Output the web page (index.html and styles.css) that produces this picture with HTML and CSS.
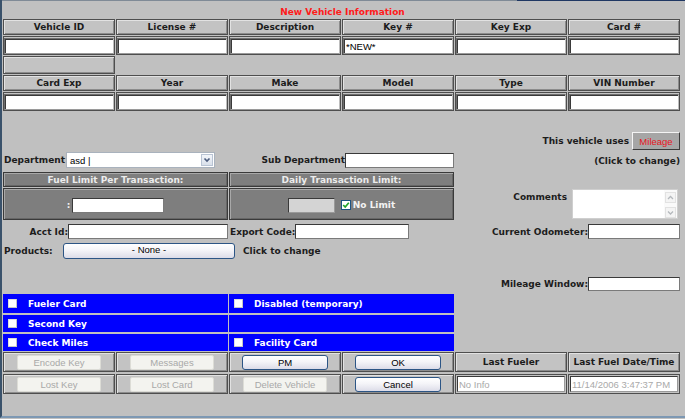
FILE: index.html
```html
<!DOCTYPE html>
<html>
<head>
<meta charset="utf-8">
<title>New Vehicle Information</title>
<link rel="stylesheet" href="styles.css">
</head>
<body>
<div class="page">
  <div class="topline"></div>
  <div class="title">New Vehicle Information</div>

  <div class="grid6 top">
    <div class="cell hd">Vehicle ID</div>
    <div class="cell hd">License #</div>
    <div class="cell hd">Description</div>
    <div class="cell hd">Key #</div>
    <div class="cell hd">Key Exp</div>
    <div class="cell hd">Card #</div>
    <div class="cell fc"><input class="fld" type="text"></div>
    <div class="cell fc"><input class="fld" type="text"></div>
    <div class="cell fc"><input class="fld" type="text"></div>
    <div class="cell fc"><input class="fld" type="text" value="*NEW*"></div>
    <div class="cell fc"><input class="fld" type="text"></div>
    <div class="cell fc"><input class="fld" type="text"></div>
    <div class="cell blank"></div>
    <div class="cell hd newrow">Card Exp</div>
    <div class="cell hd">Year</div>
    <div class="cell hd">Make</div>
    <div class="cell hd">Model</div>
    <div class="cell hd">Type</div>
    <div class="cell hd">VIN Number</div>
    <div class="cell fc"><input class="fld" type="text"></div>
    <div class="cell fc"><input class="fld" type="text"></div>
    <div class="cell fc"><input class="fld" type="text"></div>
    <div class="cell fc"><input class="fld" type="text"></div>
    <div class="cell fc"><input class="fld" type="text"></div>
    <div class="cell fc"><input class="fld" type="text"></div>
  </div>

  <div class="grid6 r-uses">
    <div class="uses">
      <span>This vehicle uses</span>
      <span class="mileage">Mileage</span>
    </div>
  </div>

  <div class="grid6 r-dept">
    <div class="dept">
      <span class="lbl-dept">Department</span>
      <div class="select">
        <span class="sel-text">asd |</span>
        <span class="sel-btn"><svg width="10" height="10" viewBox="0 0 10 10"><path d="M2.5 3.5 L5 6 L7.5 3.5" fill="none" stroke="#4b5c7e" stroke-width="1.6"/></svg></span>
      </div>
    </div>
    <div class="subdept">
      <span>Sub Department</span>
      <input class="tx w109" type="text">
    </div>
    <div class="clickchg">(Click to change)</div>
  </div>

  <div class="grid6 r-fuelhd">
    <div class="dark barL">Fuel Limit Per Transaction:</div>
    <div class="dark barR">Daily Transaction Limit:</div>
  </div>

  <div class="grid6 r-fuelbody">
    <div class="dark boxL">
      <span class="colon">:</span>
      <input class="tx w92" type="text">
    </div>
    <div class="dark boxR">
      <span class="dis"></span>
      <span class="chk"><svg width="8" height="8" viewBox="0 0 8 8"><path d="M1.2 4 L3.2 6 L6.8 1.8" fill="none" stroke="#21a32a" stroke-width="1.7"/></svg></span>
      <span class="nolimit">No Limit</span>
    </div>
    <div class="comments">
      <span class="lbl-com">Comments</span>
      <div class="ta">
        <div class="sb">
          <span class="sbb"><svg width="9" height="9" viewBox="0 0 9 9"><path d="M2 6 L4.5 3.5 L7 6" fill="none" stroke="#b4b8bc" stroke-width="1.3"/></svg></span>
          <span class="sbb"><svg width="9" height="9" viewBox="0 0 9 9"><path d="M2 3.5 L4.5 6 L7 3.5" fill="none" stroke="#b4b8bc" stroke-width="1.3"/></svg></span>
        </div>
      </div>
    </div>
  </div>

  <div class="grid6 r-acct">
    <div class="acct">
      <span>Acct Id:</span>
      <input class="tx w160" type="text">
    </div>
    <div class="export">
      <span>Export Code:</span>
      <input class="tx w114" type="text">
    </div>
    <div class="odo">
      <span>Current Odometer:</span>
      <input class="tx w92" type="text">
    </div>
  </div>

  <div class="grid6 r-prod">
    <div class="prod">
      <span class="lbl-prod">Products:</span>
      <button class="xpbtn none">- None -</button>
      <span class="prod-click">Click to change</span>
    </div>
  </div>

  <div class="grid6 r-mw">
    <div class="mw">
      <span>Mileage Window:</span>
      <input class="tx w92 h14" type="text">
    </div>
  </div>

  <div class="grid6 blue">
    <div class="bl bl-l"><span class="cb"></span><span>Fueler Card</span></div>
    <div class="bl bl-r"><span class="cb"></span><span>Disabled (temporary)</span></div>
    <div class="bl bl-l"><span class="cb"></span><span>Second Key</span></div>
    <div class="bl bl-r"></div>
    <div class="bl bl-l"><span class="cb"></span><span>Check Miles</span></div>
    <div class="bl bl-r"><span class="cb"></span><span>Facility Card</span></div>
  </div>

  <div class="grid6 btns">
    <div class="cell bc"><button class="bt off" disabled>Encode Key</button></div>
    <div class="cell bc"><button class="bt off" disabled>Messages</button></div>
    <div class="cell bc"><button class="bt xpbtn">PM</button></div>
    <div class="cell bc"><button class="bt xpbtn">OK</button></div>
    <div class="cell hd">Last Fueler</div>
    <div class="cell hd">Last Fuel Date/Time</div>
    <div class="cell bc"><button class="bt off" disabled>Lost Key</button></div>
    <div class="cell bc"><button class="bt off" disabled>Lost Card</button></div>
    <div class="cell bc"><button class="bt off" disabled>Delete Vehicle</button></div>
    <div class="cell bc"><button class="bt xpbtn">Cancel</button></div>
    <div class="cell ic"><input class="ro" type="text" value="No Info" readonly></div>
    <div class="cell ic"><input class="ro" type="text" value="11/14/2006 3:47:37 PM" readonly></div>
  </div>
</div>
</body>
</html>
```

FILE: styles.css
```css
* { box-sizing: border-box; }

html, body {
  margin: 0;
  padding: 0;
  background: #c0c0c0;
}

body {
  font: bold 9px "DejaVu Sans", Verdana, sans-serif;
  color: #1c1c1c;
}

input, button {
  font: 9.5px "Liberation Sans", Arial, sans-serif;
  margin: 0;
  outline: none;
}

.page {
  width: 685px;
  height: 418px;
  border-left: 2px solid #3a526b;
  border-bottom: 2px solid #7d98b3;
}

.topline {
  height: 1px;
  background: linear-gradient(to right, #7f8a96 0, #7f8a96 515px, #1f3763 515px);
}

.title {
  width: 679px;
  margin-left: 1px;
  height: 18px;
  padding-top: 5px;
  line-height: 12px;
  text-align: center;
  color: #ff1a1a;
}

.grid6 {
  display: grid;
  grid-template-columns: repeat(6, 112px);
  column-gap: 1px;
  margin-left: 1px;
}

/* ---------- top table ---------- */
.top {
  grid-template-rows: 16px 19px 18px 16px 19px;
  row-gap: 1px;
}

.cell {
  border: 1px solid #4e4e4e;
  box-shadow: inset 1px 1px 0 #e2e2e2, inset -1px -1px 0 #8c8c8c;
  background: #c3c3c3;
}

.hd {
  display: flex;
  align-items: center;
  justify-content: center;
  white-space: nowrap;
}

.newrow { grid-column-start: 1; }

.fc {
  padding: 1px 0 0 0;
  box-shadow: none;
}

.fld {
  display: block;
  width: 100%;
  height: 100%;
  background: #fff;
  border: 1px solid;
  border-color: #6e6e6e #bdbdbd #9a9a9a #6e6e6e;
  box-shadow: inset 1px 1px 0 #3a3a3a;
  padding: 0 2px;
  color: #000;
}

/* ---------- generic middle pieces ---------- */
.tx {
  height: 15px;
  background: #fff;
  border: 1px solid;
  border-color: #3a3a3a #7a7a7a #7a7a7a #3a3a3a;
  padding: 0 2px;
}
.w92 { width: 92px; }
.w109 { width: 109px; }
.w114 { width: 114px; }
.w160 { width: 160px; }
.h14 { height: 14px; }

.r-uses { margin-top: 21px; height: 18px; }
.uses {
  grid-column: 4 / 7;
  display: flex;
  justify-content: flex-end;
  align-items: center;
  gap: 3px;
}
.mileage {
  width: 48px;
  height: 18px;
  display: flex;
  align-items: center;
  justify-content: center;
  background: #a6a6a6;
  border: 1px solid;
  border-color: #f4f4f4 #3c3c3c #3c3c3c #f4f4f4;
  color: #e8141c;
  font: 9.5px "Liberation Sans", Arial, sans-serif;
}

.r-dept { margin-top: 2px; height: 16px; }
.dept {
  grid-column: 1 / 3;
  display: flex;
  align-items: center;
  padding-left: 1px;
}
.lbl-dept { width: 62px; }
.select {
  width: 149px;
  height: 16px;
  background: #fff;
  border: 1px solid #a9b2bd;
  display: flex;
  align-items: center;
  justify-content: space-between;
  padding: 0 1px 0 3px;
  font: 9.5px "Liberation Sans", Arial, sans-serif;
  color: #000;
}
.sel-btn {
  width: 12px;
  height: 12px;
  background: linear-gradient(#f2f5fa, #d9e0ea);
  border: 1px solid #b9c4d4;
  display: flex;
  align-items: center;
  justify-content: center;
}
.subdept {
  grid-column: 3 / 5;
  display: flex;
  justify-content: flex-end;
  align-items: center;
}
.clickchg {
  grid-column: 5 / 7;
  align-self: center;
  text-align: right;
  padding-top: 2px;
}

.r-fuelhd { margin-top: 4px; height: 15px; }
.dark {
  background: #7e7e7e;
  border: 1px solid #3a3a3a;
  box-shadow: inset 1px 1px 0 #a8a8a8, inset -1px -1px 0 #666;
  color: #ececec;
}
.barL, .barR {
  display: flex;
  align-items: center;
  justify-content: center;
}
.barL, .boxL { grid-column: 1 / 3; }
.barR, .boxR { grid-column: 3 / 5; }

.r-fuelbody { margin-top: 1px; height: 32px; }
.boxL, .boxR {
  display: flex;
  align-items: center;
  justify-content: center;
}
.boxL { padding-top: 2px; }
.boxR { padding-top: 2px; }
.colon { color: #f0f0f0; margin-right: 2px; }
.dis {
  width: 47px;
  height: 15px;
  background: #d4d4d4;
  border: 1px solid;
  border-color: #3a3a3a #9a9a9a #9a9a9a #3a3a3a;
}
.chk {
  width: 10px;
  height: 10px;
  margin-left: 6px;
  margin-right: 2px;
  background: #fff;
  border: 1px solid #1d5281;
  display: flex;
  align-items: center;
  justify-content: center;
}
.nolimit { color: #f2f2f2; }

.comments {
  grid-column: 5 / 7;
  display: flex;
  justify-content: flex-end;
  align-items: flex-start;
  gap: 5px;
  padding-right: 2px;
}
.lbl-com { margin-top: 3px; line-height: 12px; }
.ta {
  margin-top: 1px;
  width: 106px;
  height: 30px;
  background: #fff;
  border: 1px solid #cfcfcf;
  display: flex;
  justify-content: flex-end;
}
.sb {
  width: 13px;
  display: flex;
  flex-direction: column;
  justify-content: space-between;
  padding: 2px 1px 0 1px;
  background: #fafafa;
}
.sbb {
  width: 11px;
  height: 11px;
  border: 1px solid #e2e2e2;
  background: #f4f4f4;
  display: flex;
  align-items: center;
  justify-content: center;
}

.r-acct { margin-top: 4px; height: 15px; }
.acct {
  grid-column: 1 / 3;
  display: flex;
  justify-content: flex-end;
  align-items: center;
}
.export {
  grid-column: 3 / 5;
  display: flex;
  align-items: center;
  padding-left: 1px;
}
.odo {
  grid-column: 5 / 7;
  display: flex;
  justify-content: flex-end;
  align-items: center;
}

.r-prod { margin-top: 4px; height: 16px; }
.prod {
  grid-column: 1 / 5;
  display: flex;
  align-items: center;
  padding-left: 1px;
}
.lbl-prod { width: 59px; }
.xpbtn {
  border: 1px solid #2c5585;
  border-radius: 3px;
  background: linear-gradient(#ffffff, #f4f4f8 45%, #dcdce8);
  color: #000;
  padding: 0;
}
.none {
  width: 172px;
  height: 16px;
  line-height: 11px;
  padding-bottom: 3px;
}
.prod-click { margin-left: 8px; }

.r-mw { margin-top: 18px; height: 14px; }
.mw {
  grid-column: 5 / 7;
  display: flex;
  justify-content: flex-end;
  align-items: center;
}

/* ---------- blue option rows ---------- */
.blue {
  margin-top: 3px;
  grid-template-rows: 19px 17px 17px;
  row-gap: 2px;
}
.bl {
  background: #0000ff;
  color: #fff;
  display: flex;
  align-items: center;
  padding-left: 5px;
  gap: 11px;
}
.bl-l { grid-column: 1 / 3; }
.bl-r { grid-column: 3 / 5; }
.cb {
  width: 9px;
  height: 9px;
  background: #fff;
  box-shadow: inset -1px -1px 0 #c6c6c6, inset 1px 1px 0 #dedede;
}

/* ---------- bottom buttons ---------- */
.btns {
  margin-top: 1px;
  grid-template-rows: 20px 20px;
  row-gap: 2px;
}
.bc {
  display: flex;
  align-items: center;
  justify-content: center;
}
.bt {
  height: 15px;
  width: 84px;
  padding: 0;
}
.bt.xpbtn { width: 86px; }
.off {
  background: #f3f3ef;
  border: 1px solid #dcdcd6;
  border-radius: 2px;
  color: #a8a8a8;
}
.ic {
  padding: 1px 1px 1px 1px;
  box-shadow: none;
}
.ro {
  display: block;
  width: 100%;
  height: 100%;
  background: #fff;
  border: 1px solid;
  border-color: #3a3a3a #9a9a9a #9a9a9a #3a3a3a;
  padding: 0 1px;
  color: #a9a9a9;
}
```
